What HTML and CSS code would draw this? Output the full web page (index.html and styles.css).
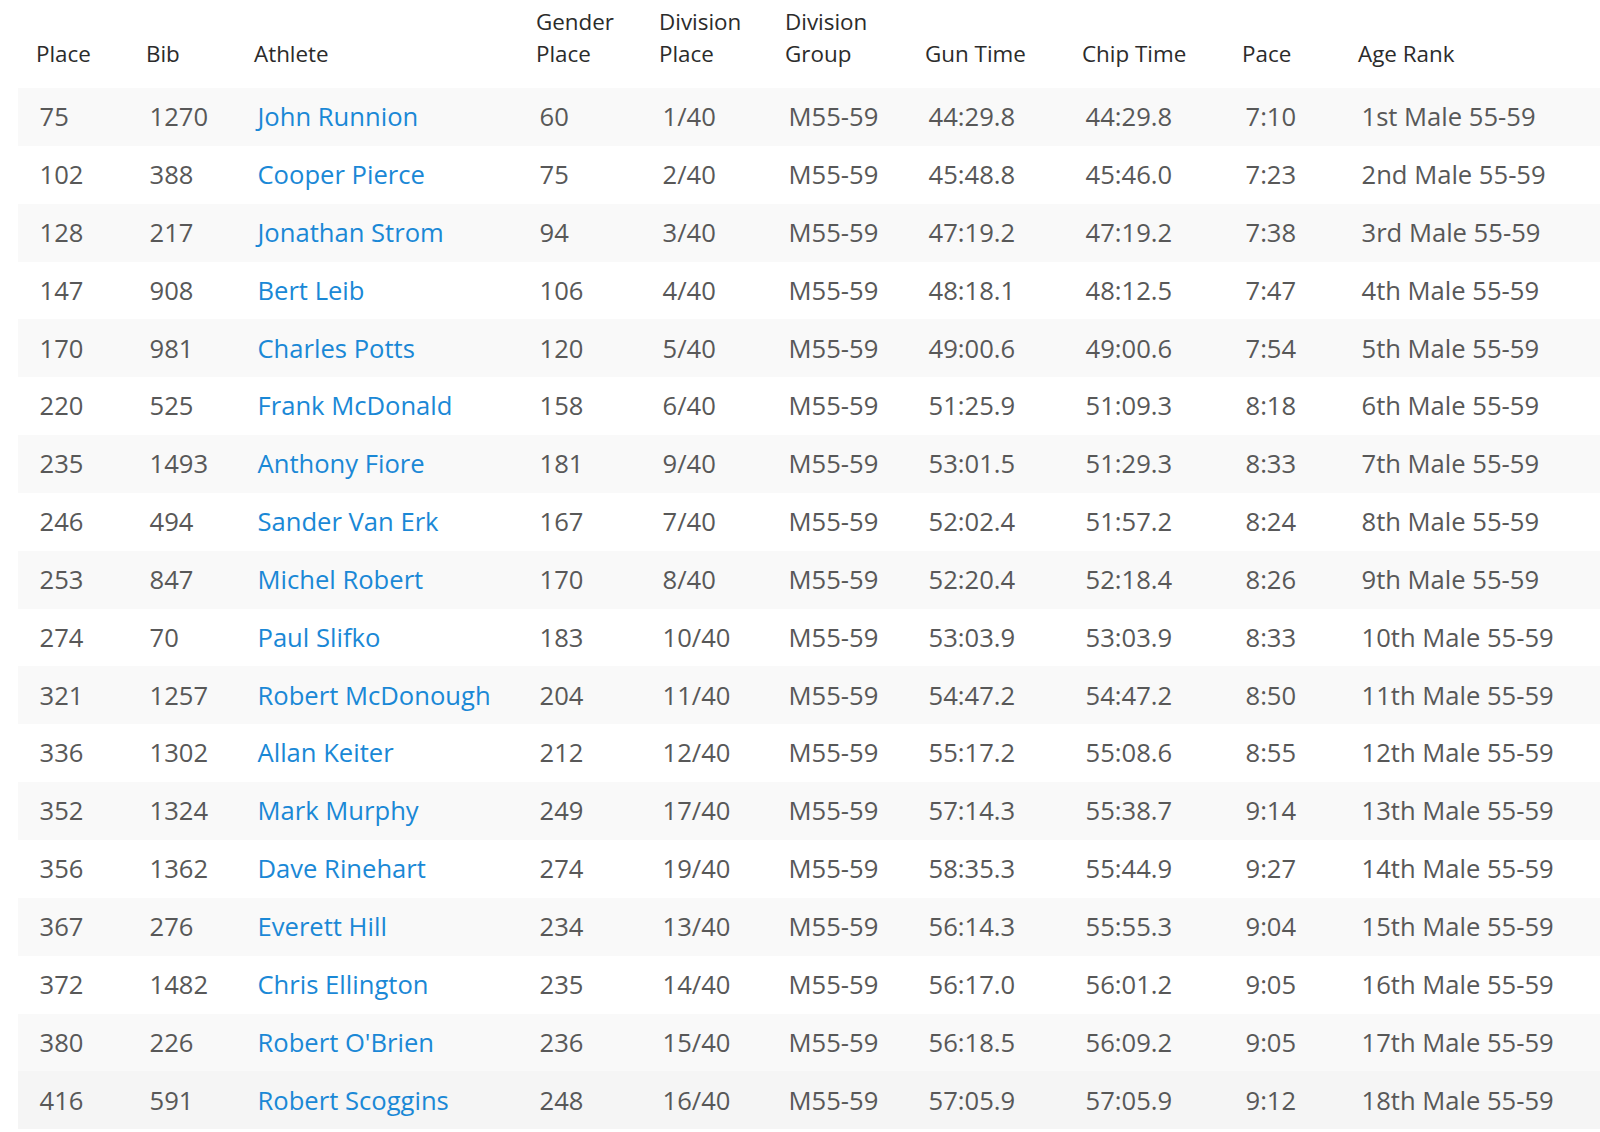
FILE: index.html
```html
<!DOCTYPE html>
<html lang="en">
<head>
<meta charset="utf-8">
<title>Results M55-59</title>
<link rel="stylesheet" href="styles.css">
</head>
<body>
<table class="results">
  <colgroup>
    <col class="c-place"><col class="c-bib"><col class="c-athlete"><col class="c-gender"><col class="c-divplace"><col class="c-divgroup"><col class="c-gun"><col class="c-chip"><col class="c-pace"><col class="c-rank">
  </colgroup>
  <thead>
    <tr>
      <th>Place</th><th>Bib</th><th>Athlete</th><th>Gender<br>Place</th><th>Division<br>Place</th><th>Division<br>Group</th><th>Gun Time</th><th>Chip Time</th><th>Pace</th><th>Age Rank</th>
    </tr>
  </thead>
  <tbody>
    <tr><td>75</td><td>1270</td><td><a href="#">John Runnion</a></td><td>60</td><td>1/40</td><td>M55-59</td><td>44:29.8</td><td>44:29.8</td><td>7:10</td><td>1st Male 55-59</td></tr>
    <tr><td>102</td><td>388</td><td><a href="#">Cooper Pierce</a></td><td>75</td><td>2/40</td><td>M55-59</td><td>45:48.8</td><td>45:46.0</td><td>7:23</td><td>2nd Male 55-59</td></tr>
    <tr><td>128</td><td>217</td><td><a href="#">Jonathan Strom</a></td><td>94</td><td>3/40</td><td>M55-59</td><td>47:19.2</td><td>47:19.2</td><td>7:38</td><td>3rd Male 55-59</td></tr>
    <tr><td>147</td><td>908</td><td><a href="#">Bert Leib</a></td><td>106</td><td>4/40</td><td>M55-59</td><td>48:18.1</td><td>48:12.5</td><td>7:47</td><td>4th Male 55-59</td></tr>
    <tr><td>170</td><td>981</td><td><a href="#">Charles Potts</a></td><td>120</td><td>5/40</td><td>M55-59</td><td>49:00.6</td><td>49:00.6</td><td>7:54</td><td>5th Male 55-59</td></tr>
    <tr><td>220</td><td>525</td><td><a href="#">Frank McDonald</a></td><td>158</td><td>6/40</td><td>M55-59</td><td>51:25.9</td><td>51:09.3</td><td>8:18</td><td>6th Male 55-59</td></tr>
    <tr><td>235</td><td>1493</td><td><a href="#">Anthony Fiore</a></td><td>181</td><td>9/40</td><td>M55-59</td><td>53:01.5</td><td>51:29.3</td><td>8:33</td><td>7th Male 55-59</td></tr>
    <tr><td>246</td><td>494</td><td><a href="#">Sander Van Erk</a></td><td>167</td><td>7/40</td><td>M55-59</td><td>52:02.4</td><td>51:57.2</td><td>8:24</td><td>8th Male 55-59</td></tr>
    <tr><td>253</td><td>847</td><td><a href="#">Michel Robert</a></td><td>170</td><td>8/40</td><td>M55-59</td><td>52:20.4</td><td>52:18.4</td><td>8:26</td><td>9th Male 55-59</td></tr>
    <tr><td>274</td><td>70</td><td><a href="#">Paul Slifko</a></td><td>183</td><td>10/40</td><td>M55-59</td><td>53:03.9</td><td>53:03.9</td><td>8:33</td><td>10th Male 55-59</td></tr>
    <tr><td>321</td><td>1257</td><td><a href="#">Robert McDonough</a></td><td>204</td><td>11/40</td><td>M55-59</td><td>54:47.2</td><td>54:47.2</td><td>8:50</td><td>11th Male 55-59</td></tr>
    <tr><td>336</td><td>1302</td><td><a href="#">Allan Keiter</a></td><td>212</td><td>12/40</td><td>M55-59</td><td>55:17.2</td><td>55:08.6</td><td>8:55</td><td>12th Male 55-59</td></tr>
    <tr><td>352</td><td>1324</td><td><a href="#">Mark Murphy</a></td><td>249</td><td>17/40</td><td>M55-59</td><td>57:14.3</td><td>55:38.7</td><td>9:14</td><td>13th Male 55-59</td></tr>
    <tr><td>356</td><td>1362</td><td><a href="#">Dave Rinehart</a></td><td>274</td><td>19/40</td><td>M55-59</td><td>58:35.3</td><td>55:44.9</td><td>9:27</td><td>14th Male 55-59</td></tr>
    <tr><td>367</td><td>276</td><td><a href="#">Everett Hill</a></td><td>234</td><td>13/40</td><td>M55-59</td><td>56:14.3</td><td>55:55.3</td><td>9:04</td><td>15th Male 55-59</td></tr>
    <tr><td>372</td><td>1482</td><td><a href="#">Chris Ellington</a></td><td>235</td><td>14/40</td><td>M55-59</td><td>56:17.0</td><td>56:01.2</td><td>9:05</td><td>16th Male 55-59</td></tr>
    <tr><td>380</td><td>226</td><td><a href="#">Robert O'Brien</a></td><td>236</td><td>15/40</td><td>M55-59</td><td>56:18.5</td><td>56:09.2</td><td>9:05</td><td>17th Male 55-59</td></tr>
    <tr class="is-hover"><td>416</td><td>591</td><td><a href="#">Robert Scoggins</a></td><td>248</td><td>16/40</td><td>M55-59</td><td>57:05.9</td><td>57:05.9</td><td>9:12</td><td>18th Male 55-59</td></tr>
  </tbody>
</table>
</body>
</html>
```
FILE: styles.css
```css
html, body {
  margin: 0;
  padding: 0;
  background: #ffffff;
}

body {
  font-family: "Open Sans", "Liberation Sans", sans-serif;
  overflow: hidden;
}

.results {
  margin-left: 18px;
  width: 1582px;
  table-layout: fixed;
  border-collapse: collapse;
  border-spacing: 0;
}

.c-place { width: 110px; }
.c-bib { width: 108px; }
.c-athlete { width: 282px; }
.c-gender { width: 123px; }
.c-divplace { width: 126px; }
.c-divgroup { width: 140px; }
.c-gun { width: 157px; }
.c-chip { width: 160px; }
.c-pace { width: 116px; }
.c-rank { width: 260px; }

.results th {
  font-weight: 400;
  font-size: 22.4px;
  line-height: 32px;
  color: #2b2b2b;
  text-align: left;
  vertical-align: bottom;
  padding: 6px 0 18px 18px;
  white-space: nowrap;
}

.results td {
  font-size: 25.6px;
  line-height: 36.57px;
  color: #585858;
  text-align: left;
  vertical-align: middle;
  padding: 11.2px 0 10.1px 21.5px;
  white-space: nowrap;
}

.results tbody tr:nth-child(odd) {
  background: #f9f9f9;
}

.results tbody tr.is-hover {
  background: #f5f5f5;
}

.results a {
  color: #1a88d6;
  text-decoration: none;
}
```
